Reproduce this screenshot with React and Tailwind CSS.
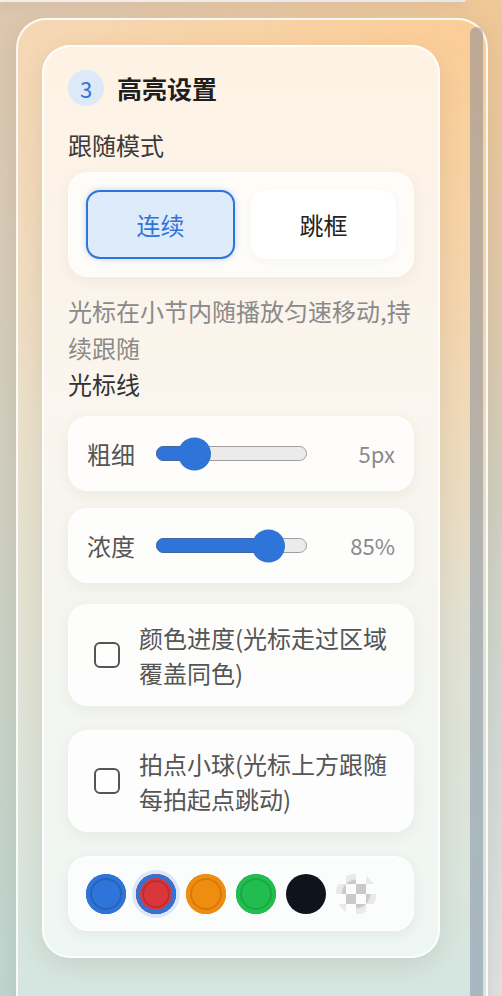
import React from "react";

const font = { fontFamily: '"Noto Sans CJK SC", "Noto Sans", sans-serif' };

function Slider({ label, value, fillClass, thumbClass }) {
  return (
    <div className="flex items-center h-[75px] px-[18px] rounded-[20px] bg-white/75 border border-white/80 shadow-[0_4px_14px_rgba(90,80,60,0.07)]">
      <span className="text-[24px] leading-[36px] text-[#555]">{label}</span>
      <div className="relative ml-[21px] w-[151px] h-[15px] rounded-full bg-[#ebebeb] border-[1.5px] border-[#9f9f9f]">
        <div className={`absolute -left-[1.5px] -top-[1.5px] h-[15px] rounded-full bg-[#2f74d8] border-[1.5px] border-[#42679f] ${fillClass}`} />
        <div className={`absolute top-1/2 -translate-y-1/2 w-[33px] h-[33px] rounded-full bg-[#2f74d8] ${thumbClass}`} />
      </div>
      <span className="ml-auto text-[22px] text-[#8a8a8a]">{value}</span>
    </div>
  );
}

function CheckRow({ line1, line2, className }) {
  return (
    <div className={`flex items-center gap-[19px] px-[25px] py-[15px] rounded-[20px] bg-white/75 border border-white/80 shadow-[0_4px_14px_rgba(90,80,60,0.07)] ${className}`}>
      <div className="shrink-0 w-[26px] h-[26px] rounded-[6px] border-2 border-[#555] bg-white/60" />
      <div className="text-[24px] leading-[35px] text-[#555] whitespace-nowrap">
        {line1}
        <br />
        {line2}
      </div>
    </div>
  );
}

const swatches = [
  "bg-[#2f74d8] shadow-[inset_0_0_0_4px_#2f74d8,inset_0_0_0_6px_rgba(0,0,0,0.14)]",
  "bg-[#d9373c] shadow-[inset_0_0_0_4px_#2f74d8,inset_0_0_0_6px_#d9373c,inset_0_0_0_8px_rgba(0,0,0,0.14),0_0_0_4px_#dce8fa]",
  "bg-[#f08c10] shadow-[inset_0_0_0_4px_#f08c10,inset_0_0_0_6px_rgba(0,0,0,0.12)]",
  "bg-[#22bd4f] shadow-[inset_0_0_0_4px_#22bd4f,inset_0_0_0_6px_rgba(0,0,0,0.12)]",
  "bg-[#0f131c]",
];

export default function App() {
  return (
    <div
      className="relative h-[996px] overflow-hidden bg-[radial-gradient(circle_at_100%_0%,#f0c796_0%,transparent_45%),radial-gradient(circle_at_100%_100%,#dfe1e3_0%,transparent_45%),linear-gradient(180deg,#ddc6ae_0%,#cfcfc0_50%,#bed6d0_100%)]"
      style={font}
    >
      {/* previous panel edge */}
      <div className="h-[2px] w-[466px] rounded-br-[6px] bg-[linear-gradient(90deg,#f5eee6,#e5e8ef)] shadow-[0_3px_10px_rgba(90,100,130,0.3)]" />

      <div className="relative ml-4 mt-4 w-[472px] h-[1000px] rounded-t-[30px] border-2 border-white/85 bg-[radial-gradient(circle_at_95%_0%,#fbcd96_0%,transparent_55%),linear-gradient(180deg,#f4dbc0_0%,#e8e0cc_45%,#d4e6e2_100%)] pt-[25px] pl-6 shadow-[0_6px_20px_rgba(120,100,80,0.15)]">
        {/* scrollbar */}
        <div className="absolute right-[3px] top-[7px] bottom-0 w-[13px] rounded-t-[10px] bg-slate-500/40" />

        <div className="w-[398px] rounded-[28px] border-2 border-white/90 bg-[linear-gradient(180deg,#fef2e4_0%,#faf5ee_40%,#eef6f3_100%)] px-6 pt-[23px] pb-[25px] shadow-[0_8px_24px_rgba(90,80,60,0.12)]">
          <div className="flex items-center gap-[13px]">
            <div className="w-9 h-9 rounded-full bg-[#dde9f8] flex items-center justify-center text-[22px] text-[#2f74d8]">
              3
            </div>
            <div className="text-[25px] font-bold text-[#1f1f1f] leading-[36px]">高亮设置</div>
          </div>

          <div className="mt-[21px] text-[24px] leading-[36px] text-[#3a3a3a]">跟随模式</div>

          <div className="mt-[9px] flex gap-4 p-[17px] rounded-[20px] bg-white/70 border border-white/80 shadow-[0_4px_14px_rgba(90,80,60,0.07)]">
            <div className="flex-1 h-[69px] rounded-[14px] border-2 border-[#2f74d8] bg-[#deebfb] flex items-center justify-center text-[24px] text-[#2f74d8] shadow-[0_0_6px_rgba(47,116,216,0.3)]">
              连续
            </div>
            <div className="flex-1 h-[69px] rounded-[14px] bg-white flex items-center justify-center text-[24px] text-[#222] shadow-[0_2px_8px_rgba(0,0,0,0.04)]">
              跳框
            </div>
          </div>

          <div className="mt-[15px] text-[24px] leading-[37px] text-[#8a8a8a] whitespace-nowrap">
            光标在小节内随播放匀速移动,持
            <br />
            续跟随
          </div>
          <div className="text-[24px] leading-[36px] text-[#333]">光标线</div>

          <div className="mt-[14px]">
            <Slider label="粗细" value="5px" fillClass="w-[40px]" thumbClass="left-[21px]" />
          </div>
          <div className="mt-[17px]">
            <Slider label="浓度" value="85%" fillClass="w-[114px]" thumbClass="left-[95px]" />
          </div>

          <CheckRow className="mt-[21px]" line1="颜色进度(光标走过区域" line2="覆盖同色)" />
          <CheckRow className="mt-6" line1="拍点小球(光标上方跟随" line2="每拍起点跳动)" />

          <div className="mt-6 flex items-center gap-[10px] h-[75px] px-[17px] rounded-[20px] bg-white/75 border border-white/80 shadow-[0_4px_14px_rgba(90,80,60,0.07)]">
            {swatches.map((cls, i) => (
              <div key={i} className={`w-10 h-10 rounded-full ${cls}`} />
            ))}
            <div className="w-10 h-10 rounded-full bg-[conic-gradient(#c4c4c4_25%,transparent_0_50%,#c4c4c4_0_75%,transparent_0)] bg-[length:20px_20px] shadow-[inset_0_0_0_4px_rgba(255,255,255,0.15),inset_0_0_0_6px_rgba(255,255,255,0.55)] opacity-90" />
          </div>
        </div>
      </div>
    </div>
  );
}
